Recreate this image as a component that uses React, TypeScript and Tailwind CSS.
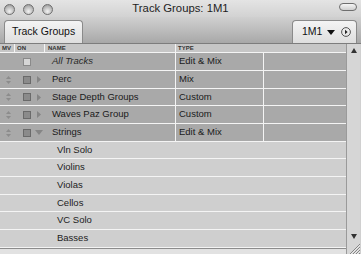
import React from "react";

type Row = { name: string; type?: string; kind: "all" | "group" | "open" | "sub"; h: number };

const rows: Row[] = [
  { name: "All Tracks", type: "Edit & Mix", kind: "all", h: 18 },
  { name: "Perc", type: "Mix", kind: "group", h: 18 },
  { name: "Stage Depth Groups", type: "Custom", kind: "group", h: 17 },
  { name: "Waves Paz Group", type: "Custom", kind: "group", h: 18 },
  { name: "Strings", type: "Edit & Mix", kind: "open", h: 18 },
  { name: "Vln Solo", kind: "sub", h: 17 },
  { name: "Violins", kind: "sub", h: 18 },
  { name: "Violas", kind: "sub", h: 18 },
  { name: "Cellos", kind: "sub", h: 17 },
  { name: "VC Solo", kind: "sub", h: 18 },
  { name: "Basses", kind: "sub", h: 18 },
];

function Light() {
  return (
    <div className="w-[11px] h-[11px] rounded-full border border-[#6f6f6f] bg-[radial-gradient(circle_at_50%_70%,#f2f2f2_0%,#bdbdbd_55%,#8c8c8c_100%)]" />
  );
}

function UpDown() {
  return (
    <svg width="5" height="8" viewBox="0 0 5 8">
      <path d="M2.5 0 L5 3 L0 3 Z" fill="#8c8c8c" />
      <path d="M2.5 8 L5 5 L0 5 Z" fill="#8c8c8c" />
    </svg>
  );
}

function Tri({ open }: { open?: boolean }) {
  return open ? (
    <svg width="8" height="5" viewBox="0 0 8 5">
      <path d="M0 0 L8 0 L4 5 Z" fill="#858585" />
    </svg>
  ) : (
    <svg width="4" height="7" viewBox="0 0 4 7">
      <path d="M0 0 L4 3.5 L0 7 Z" fill="#858585" />
    </svg>
  );
}

export default function App() {
  return (
    <div
      className="w-[361px] h-[254px] overflow-hidden flex flex-col bg-[#d0d0d0]"
      style={{ fontFamily: '"Liberation Sans", Arial, sans-serif' }}
    >
      {/* Title bar */}
      <div className="h-[17px] grid grid-cols-[1fr_auto_1fr] items-center bg-[linear-gradient(#e4e4e4,#d2d2d2)]">
        <div className="flex items-center gap-[8px] pl-[4px] pt-[1px]">
          <Light />
          <Light />
          <Light />
        </div>
        <div className="text-[11.3px] text-[#1e1e1e] leading-none pt-[1px]">Track Groups: 1M1</div>
        <div className="flex justify-end pr-[4px]">
          <div className="w-[18px] h-[8px] rounded-full border border-[#6e6e6e] bg-[linear-gradient(#f6f6f6,#cfcfcf)] mb-[3px]" />
        </div>
      </div>

      {/* Tab bar */}
      <div className="h-[27px] flex items-end justify-between px-[4px] bg-[linear-gradient(#d0d0d0,#a8a8a8)] border-b border-[#7d7d7d]">
        <div className="h-[23px] px-[7px] flex items-center rounded-t-[4px] border border-b-0 border-[#8a8a8a] bg-[linear-gradient(#f4f4f4,#dedede)] text-[10.5px] text-[#111]">
          Track Groups
        </div>
        <div className="h-[23px] w-[65px] pl-[9px] flex items-center gap-[5px] rounded-t-[4px] border border-b-0 border-[#8a8a8a] bg-[linear-gradient(#f4f4f4,#dedede)] text-[10.5px] text-[#111]">
          <span>1M1</span>
          <svg width="8" height="5" viewBox="0 0 8 5" className="mt-[1px]">
            <path d="M0 0 L8 0 L4 5 Z" fill="#111" />
          </svg>
          <svg width="10" height="10" viewBox="0 0 10 10" className="ml-[1px]">
            <circle cx="5" cy="5" r="4.4" fill="none" stroke="#444" strokeWidth="0.9" />
            <path d="M4 2.8 L6.6 5 L4 7.2 Z" fill="#222" />
          </svg>
        </div>
      </div>

      {/* Content */}
      <div className="flex-1 flex min-h-0">
        <div className="w-[347px] flex flex-col border-r border-[#9a9a9a]">
          {/* Header */}
          <div className="h-[9px] flex items-stretch bg-[#c6c6c6] border-b border-[#f4f4f4] text-[6px] font-bold text-[#333] leading-none">
            <div className="w-[15px] flex items-center pl-[2px] border-r border-[#f4f4f4]">MV</div>
            <div className="w-[30px] flex items-center pl-[2px] border-r border-[#f4f4f4]">ON</div>
            <div className="w-[131px] flex items-center pl-[3px] border-r border-[#f4f4f4]">NAME</div>
            <div className="flex-1 flex items-center pl-[2px]">TYPE</div>
          </div>
          {/* Rows */}
          {rows.map((r) =>
            r.kind === "sub" ? (
              <div
                key={r.name}
                style={{ height: r.h }}
                className="flex items-center bg-[#cfcfcf] border-b border-[#f4f4f4] pl-[57px] text-[9.5px] text-[#1c1c1c]"
              >
                {r.name}
              </div>
            ) : (
              <div
                key={r.name}
                style={{ height: r.h }}
                className="flex items-stretch bg-[#a9a9a9] border-b border-[#f4f4f4] text-[9.5px] text-[#1a1a1a]"
              >
                <div className="w-[15px] flex items-center justify-center pl-[1px]">
                  {r.kind !== "all" && <UpDown />}
                </div>
                <div className="w-[10px] flex items-center justify-center ml-[7px]">
                  {r.kind === "all" ? (
                    <div className="w-[8px] h-[8px] border border-[#8a8a8a] bg-[#d6d6d6]" />
                  ) : (
                    <div className="w-[8px] h-[8px] border border-[#6a6a6a] bg-[#8b8b8b]" />
                  )}
                </div>
                <div className="w-[14px] flex items-center pl-[5px]">
                  {r.kind === "group" && <Tri />}
                  {r.kind === "open" && (
                    <span className="-ml-[2px] flex">
                      <Tri open />
                    </span>
                  )}
                </div>
                <div
                  className={
                    "w-[130px] flex items-center pl-[6px] border-r border-[#f4f4f4] " +
                    (r.kind === "all" ? "italic text-[#2a2a2a]" : "")
                  }
                >
                  {r.name}
                </div>
                <div className="w-[88px] flex items-center pl-[3px] border-r border-[#f4f4f4]">{r.type}</div>
                <div className="flex-1" />
              </div>
            )
          )}
          <div className="flex-1 bg-[#e2e2e2] border-t border-[#8c8c8c]" />
        </div>

        {/* Scrollbar */}
        <div className="w-[13px] flex flex-col bg-[#d6d6d6]">
          <div className="h-[11px] flex items-center justify-center pt-[2px]">
            <svg width="6" height="5" viewBox="0 0 6 5">
              <path d="M3 0 L6 5 L0 5 Z" fill="#333" />
            </svg>
          </div>
          <div className="flex-1" />
          <div className="h-[9px] flex items-center justify-center">
            <svg width="6" height="5" viewBox="0 0 6 5">
              <path d="M0 0 L6 0 L3 5 Z" fill="#333" />
            </svg>
          </div>
          <div className="h-[13px] flex items-end justify-end">
            <svg width="12" height="12" viewBox="0 0 12 12">
              <path d="M2 12 L12 2 M5 12 L12 5 M8 12 L12 8 M11 12 L12 11" stroke="#7a7a7a" strokeWidth="0.9" />
              <path d="M3 12 L12 3 M6 12 L12 6 M9 12 L12 9" stroke="#f2f2f2" strokeWidth="0.7" />
            </svg>
          </div>
        </div>
      </div>
    </div>
  );
}
